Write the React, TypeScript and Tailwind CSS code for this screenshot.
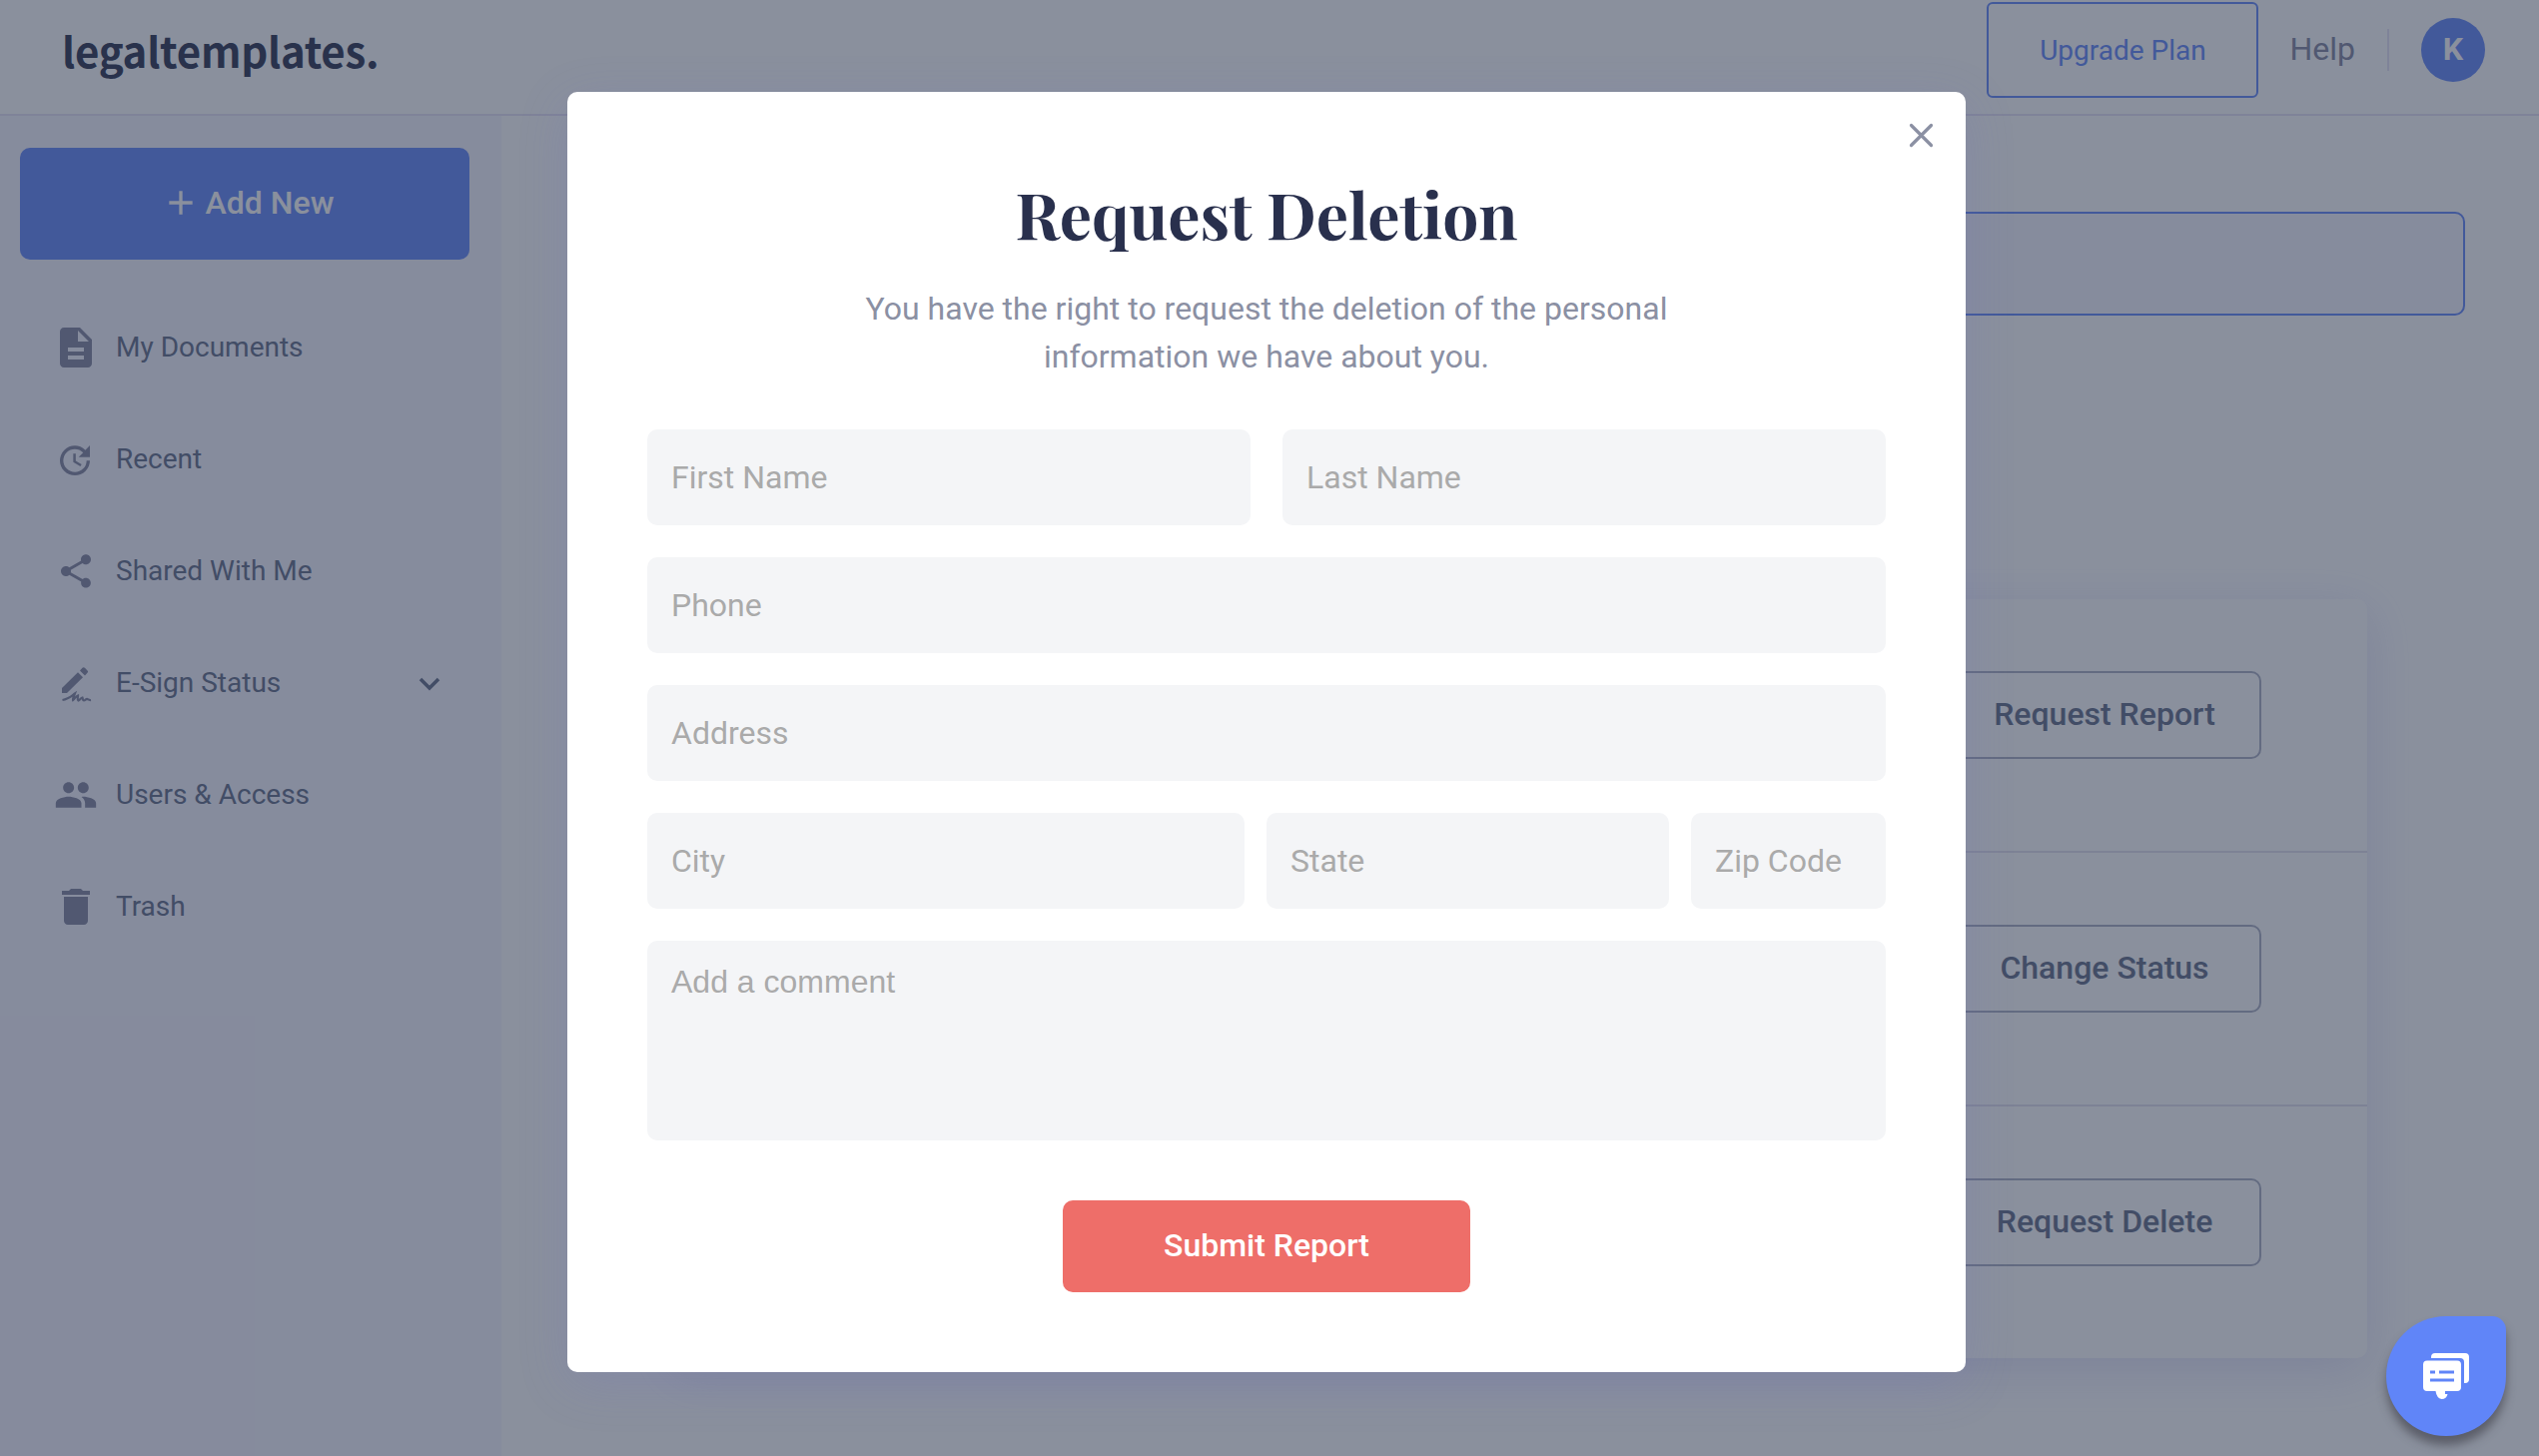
import { MdAdd, MdDelete, MdDescription, MdGroup, MdShare, MdUpdate } from "react-icons/md";

const navItems = [
    { label: "My Documents", icon: <MdDescription size={48} /> },
    { label: "Recent", icon: <MdUpdate size={40} className="mr-0.5 mt-0.5" /> },
    { label: "Shared With Me", icon: <MdShare size={40} /> },
    { label: "E-Sign Status", icon: <SignIcon />, expandable: true },
    { label: "Users & Access", icon: <MdGroup size={44} /> },
    { label: "Trash", icon: <MdDelete size={48} /> },
];

const actions = ["Request Report", "Change Status", "Request Delete"];

function SignIcon() {
    return (
        <svg className="ml-0.5 mt-1" width="30" height="36" viewBox="0 0 30 36" fill="currentColor">
            <path d="M0 21 16 5.200l5 5L5 26H0z" />
            <path d="m18 3.500 2.500-2.700q1.200-1.200 2.400 0l2.600 2.600q1.200 1.200 0 2.400L23 8.500z" />
            <path d="M.5 33c6-1 9-4 12.500-6.500-1 3-2.500 5-2 6.500 2-1.500 3-4 5-4.500 0 2-1 4 .5 5 1.500-.5 2-2.500 4-3 .5 1 0 3 1.500 3s2-2 3.500-1.500c1 .4 1.500 1.300 3.500 1" fill="none" stroke="currentColor" strokeWidth="2.200" />
        </svg>
    );
}

function ChatIcon() {
    return (
        <svg width="46" height="46" viewBox="0 0 46 46" fill="#fff">
            <path d="M8 5V4q0-4 4-4h30q4 0 4 4v22q0 4-4 4h-1V9q0-4-4-4z" />
            <path fillRule="evenodd" d="M4 7.500h30q4 0 4 4V34q0 4-4 4H22v3h2.500q-1 5-6 5-5-1-6-8H4q-4 0-4-4V11.500q0-4 4-4zm3 10v3h5v-3zm9 0v3h15v-3zm-9 8v3h24v-3z" />
        </svg>
    );
}

function Field({ placeholder, className = "" }: { placeholder: string; className?: string }) {
    return (
        <input
            placeholder={placeholder}
            className={`h-24 min-w-0 rounded-[10px] bg-[#f4f5f7] px-6 text-[32px] placeholder:text-[#aaaaaa] ${className}`}
        />
    );
}

function Header() {
    return (
        <header className="flex h-[116px] items-start justify-between border-b-2 border-[#e7e3f4] pl-[62px] pr-[54px]">
            <div className="mt-2.5 text-[42px] leading-[80px] font-bold tracking-[-0.25px] text-[#29304d] font-['Noto_Sans_CJK_SC',sans-serif]">
                legaltemplates.
            </div>
            <div className="flex h-[100px] items-center">
                <button className="h-24 w-[272px] rounded-md border-2 border-[#6085f8] pt-0.5 text-[28px] text-[#6085f8]">
                    Upgrade Plan
                </button>
                <span className="ml-[31px] pb-0.5 text-[32px] text-[#80849e]">Help</span>
                <span className="ml-8 h-[42px] w-0.5 bg-[#e7e3f4]" />
                <span className="ml-8 flex size-16 items-center justify-center rounded-full bg-[#6085f8] pb-0.5 text-[32px] font-bold text-white">
                    K
                </span>
            </div>
        </header>
    );
}

function Sidebar() {
    return (
        <aside className="w-[502px] bg-[#f6f5ff] pl-5 pt-8">
            <button className="flex h-28 w-[450px] items-center justify-center gap-[5px] rounded-[10px] bg-[#6085f8] pb-0.5 pl-[5px] text-[32px] font-medium text-white">
                <MdAdd size={40} />
                Add New
            </button>
            <nav className="mt-8">
                {navItems.map((item) => (
                    <div key={item.label} className="flex h-28 items-center pl-[30px] text-[28px] text-[#606a86]">
                        <span className="flex w-[52px] justify-center text-[#80849e]">{item.icon}</span>
                        <span className="ml-[14px] grow">{item.label}</span>
                        {item.expandable && (
                            <svg className="mr-[61px] mt-0.5" width="22" height="14" viewBox="0 0 22 14" fill="none" stroke="currentColor" strokeWidth="3.500">
                                <path d="m2 2 9 9 9-9" />
                            </svg>
                        )}
                    </div>
                ))}
            </nav>
        </aside>
    );
}

function Main() {
    return (
        <main className="grow px-[74px] pt-24">
            <div className="h-[104px] rounded-[10px] border-2 border-[#6085f8] bg-[#f6f5ff]" />
            <div className="mx-[98px] mt-[284px] rounded-[10px] bg-white shadow-[0_12px_50px_rgba(110,110,220,0.2)]">
                {actions.map((label) => (
                    <div key={label} className="flex h-[254px] items-start justify-end border-b-2 border-[#e2e1ee] pr-[106px] pt-[72px] last:h-[252px] last:border-0">
                        <button className="h-[88px] w-[314px] rounded-[10px] border-2 border-[#a9aec2] pb-0.5 text-[32px] font-medium text-[#606a86]">
                            {label}
                        </button>
                    </div>
                ))}
            </div>
        </main>
    );
}

function DeletionModal() {
    return (
        <div className="relative mr-[6px] mt-[92px] h-[1282px] w-[1400px] rounded-[10px] bg-white px-20 pt-20 text-center shadow-[0_12px_50px_rgba(110,110,200,0.2)]">
            <button className="absolute right-[32px] top-[31px]">
                <svg width="25" height="25" viewBox="0 0 25 25" stroke="#8b90a3" strokeWidth="3.200" strokeLinecap="round">
                    <path d="m2.500 2.500 20 20m0-20-20 20" />
                </svg>
            </button>
            <h1 className="h-[93px] text-[64px] leading-[84px] font-bold text-[#29304d] font-['Playfair_Display','Liberation_Serif',serif]">
                Request Deletion
            </h1>
            <p className="mx-auto mt-5 w-[840px] text-[32px] leading-[48px] text-[#8b90a3]">
                You have the right to request the deletion of the personal information we have about you.
            </p>
            <form className="mt-[49px] flex flex-col gap-8">
                <div className="flex gap-8">
                    <Field placeholder="First Name" className="flex-1" />
                    <Field placeholder="Last Name" className="flex-1" />
                </div>
                <Field placeholder="Phone" />
                <Field placeholder="Address" />
                <div className="flex gap-[22px]">
                    <Field placeholder="City" className="w-[598px]" />
                    <Field placeholder="State" className="w-[403px]" />
                    <Field placeholder="Zip Code" className="w-[195px]" />
                </div>
                <textarea
                    placeholder="Add a comment"
                    className="h-[200px] resize-none rounded-[10px] bg-[#f4f5f7] px-6 py-[22px] text-[32px] leading-[38px] placeholder:text-[#aaaaaa] font-['Liberation_Sans',sans-serif]"
                />
                <button className="mx-auto mt-7 h-[92px] w-[408px] rounded-[10px] bg-[#ee6e69] pb-0.5 text-[32px] font-medium text-white">
                    Submit Report
                </button>
            </form>
        </div>
    );
}

export default function App() {
    return (
        <div className="relative h-[1458px] w-[2542px] overflow-hidden bg-white font-[Roboto,sans-serif]">
            <div className="flex h-full flex-col">
                <Header />
                <div className="flex grow">
                    <Sidebar />
                    <Main />
                </div>
            </div>

            {/* Overlay */}
            <div className="absolute inset-0 flex items-start justify-center bg-[#2a354d]/55">
                <DeletionModal />
            </div>

            {/* Chat launcher */}
            <button className="absolute right-[33px] bottom-5 flex size-[120px] items-center justify-center rounded-[60px] rounded-tr-[14px] bg-[#6085f8] shadow-[0_9px_10px_rgba(60,60,70,0.6)]">
                <ChatIcon />
            </button>
        </div>
    );
}
